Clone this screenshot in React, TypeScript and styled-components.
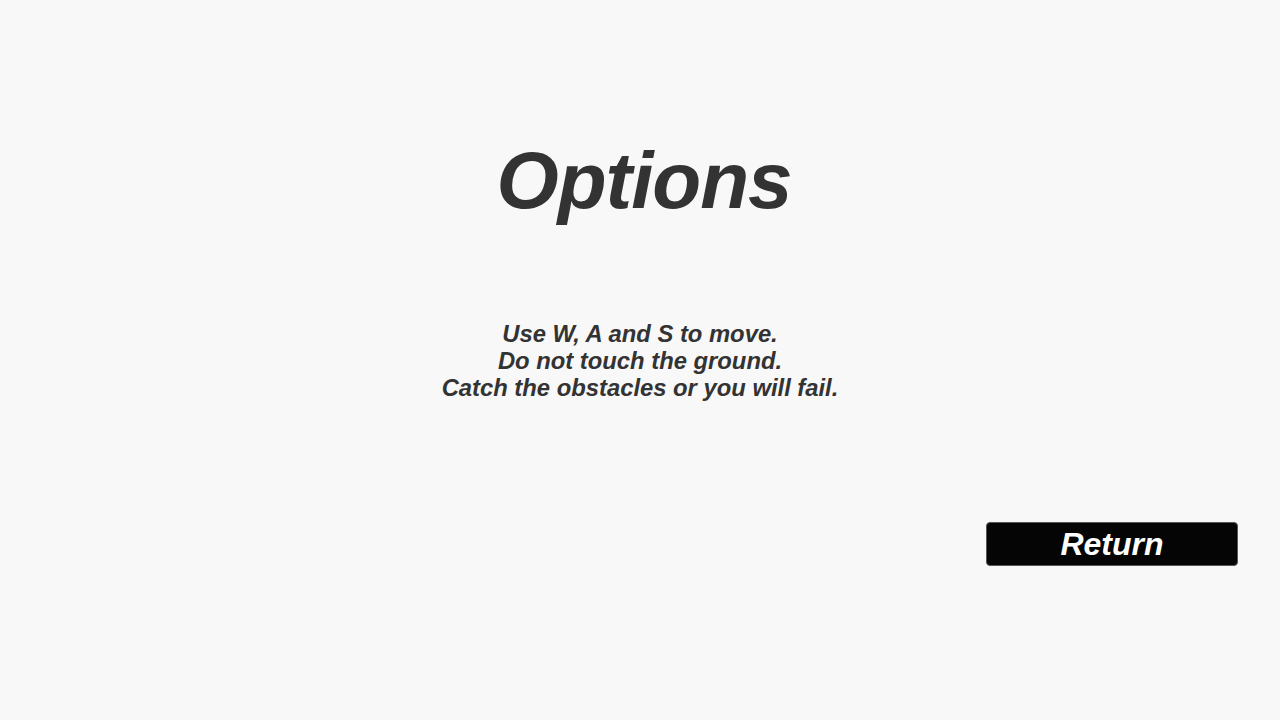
import styled, { createGlobalStyle } from 'styled-components';

const GlobalStyle = createGlobalStyle`
  html, body {
    margin: 0;
    padding: 0;
    background: #f8f8f8;
  }
  body {
    font-family: 'Liberation Sans', Arial, sans-serif;
  }
`;

const Screen = styled.div`
  width: 1280px;
  height: 720px;
  display: flex;
  flex-direction: column;
  align-items: center;
  background: #f8f8f8;
  color: #333;
  font-weight: 700;
  font-style: italic;
`;

const Title = styled.h1`
  margin: 131px 0 0 8px;
  font-size: 80px;
  line-height: 100px;
  font-weight: 700;
  letter-spacing: -1px;
`;

const Instructions = styled.p`
  margin: 89px 0 0;
  font-size: 23.8px;
  line-height: 27px;
  text-align: center;
`;

const Footer = styled.div`
  align-self: stretch;
  display: flex;
  justify-content: flex-end;
  padding-right: 42px;
  margin-top: 121px;
`;

const ReturnButton = styled.button`
  width: 252px;
  height: 44px;
  border: 1px solid #555;
  border-radius: 4px;
  background: #050505;
  color: #fff;
  font-family: 'Liberation Sans', Arial, sans-serif;
  font-size: 32px;
  font-weight: 700;
  font-style: italic;
  padding: 0;
  cursor: pointer;
`;

export default function App() {
  return (
    <>
      <GlobalStyle />
      <Screen>
        <Title>Options</Title>
        <Instructions>
          Use W, A and S to move.
          <br />
          Do not touch the ground.
          <br />
          Catch the obstacles or you will fail.
        </Instructions>
        <Footer>
          <ReturnButton>Return</ReturnButton>
        </Footer>
      </Screen>
    </>
  );
}
